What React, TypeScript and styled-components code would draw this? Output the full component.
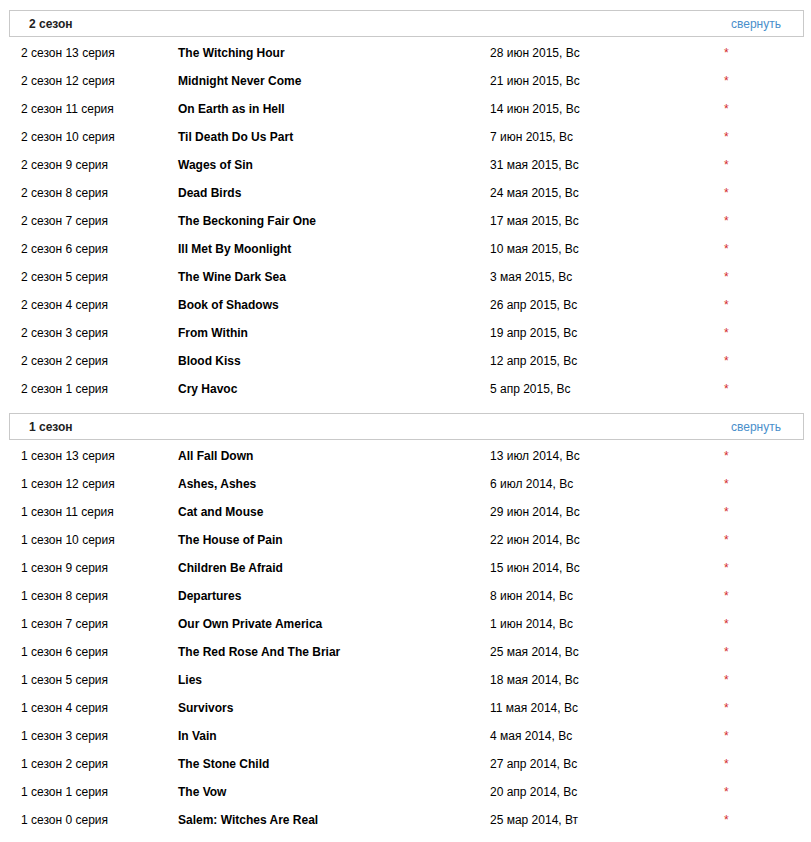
import * as React from "react";
import styled, { createGlobalStyle } from "styled-components";

const GlobalStyle = createGlobalStyle`
    body {
        margin: 0;
        background: #fff;
        font-family: "Liberation Sans", Arial, sans-serif;
        font-size: 12px;
        color: #000;
    }
`;

const Page = styled.div`
    width: 795px;
    padding: 10px 0 0 9px;
`;

const Season = styled.section`
    margin-bottom: 12px;
`;

const SeasonHeader = styled.div`
    display: flex;
    align-items: center;
    justify-content: space-between;
    height: 25px;
    border: 1px solid #c9c9c9;
    padding: 0 22px 0 19px;
`;

const SeasonTitle = styled.span`
    font-weight: bold;
    color: #222;
`;

const Collapse = styled.a`
    color: #4a8fcb;
    text-decoration: none;
    cursor: pointer;
`;

const Row = styled.div`
    display: grid;
    grid-template-columns: 157px 312px 234px 1fr;
    align-items: center;
    box-sizing: border-box;
    height: 28px;
    padding: 4px 0 0 12px;
`;

const Title = styled.span`
    font-weight: bold;
`;

const Star = styled.span`
    color: #d42a2a;
`;

type Episode = [string, string, string];

const season2: Episode[] = [
    ["13", "The Witching Hour", "28 июн 2015, Вс"],
    ["12", "Midnight Never Come", "21 июн 2015, Вс"],
    ["11", "On Earth as in Hell", "14 июн 2015, Вс"],
    ["10", "Til Death Do Us Part", "7 июн 2015, Вс"],
    ["9", "Wages of Sin", "31 мая 2015, Вс"],
    ["8", "Dead Birds", "24 мая 2015, Вс"],
    ["7", "The Beckoning Fair One", "17 мая 2015, Вс"],
    ["6", "Ill Met By Moonlight", "10 мая 2015, Вс"],
    ["5", "The Wine Dark Sea", "3 мая 2015, Вс"],
    ["4", "Book of Shadows", "26 апр 2015, Вс"],
    ["3", "From Within", "19 апр 2015, Вс"],
    ["2", "Blood Kiss", "12 апр 2015, Вс"],
    ["1", "Cry Havoc", "5 апр 2015, Вс"],
];

const season1: Episode[] = [
    ["13", "All Fall Down", "13 июл 2014, Вс"],
    ["12", "Ashes, Ashes", "6 июл 2014, Вс"],
    ["11", "Cat and Mouse", "29 июн 2014, Вс"],
    ["10", "The House of Pain", "22 июн 2014, Вс"],
    ["9", "Children Be Afraid", "15 июн 2014, Вс"],
    ["8", "Departures", "8 июн 2014, Вс"],
    ["7", "Our Own Private America", "1 июн 2014, Вс"],
    ["6", "The Red Rose And The Briar", "25 мая 2014, Вс"],
    ["5", "Lies", "18 мая 2014, Вс"],
    ["4", "Survivors", "11 мая 2014, Вс"],
    ["3", "In Vain", "4 мая 2014, Вс"],
    ["2", "The Stone Child", "27 апр 2014, Вс"],
    ["1", "The Vow", "20 апр 2014, Вс"],
    ["0", "Salem: Witches Are Real", "25 мар 2014, Вт"],
];

const SeasonBlock: React.FC<{ num: number; episodes: Episode[] }> = ({ num, episodes }) => (
    <Season>
        <SeasonHeader>
            <SeasonTitle>{num} сезон</SeasonTitle>
            <Collapse>свернуть</Collapse>
        </SeasonHeader>
        {episodes.map(([ep, title, date]) => (
            <Row key={ep}>
                <span>{num} сезон {ep} серия</span>
                <Title>{title}</Title>
                <span>{date}</span>
                <Star>*</Star>
            </Row>
        ))}
    </Season>
);

export default function App() {
    return (
        <Page>
            <GlobalStyle />
            <SeasonBlock num={2} episodes={season2} />
            <SeasonBlock num={1} episodes={season1} />
        </Page>
    );
}
